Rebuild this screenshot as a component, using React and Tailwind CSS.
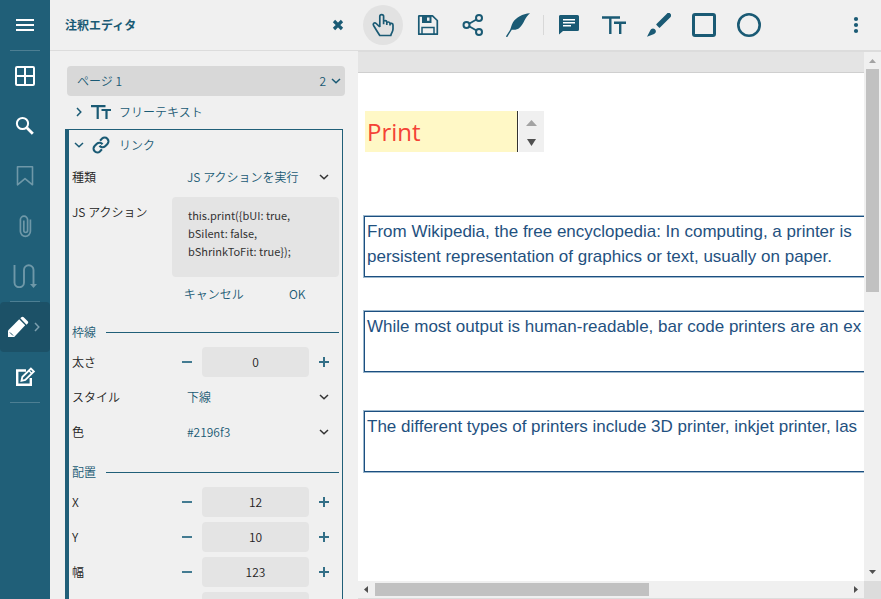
import React from "react";

function Svg({ size = 24, w, h, box, className = "", children }) {
  return (
    <svg
      width={w || size}
      height={h || size}
      viewBox={box || `0 0 ${w || size} ${h || size}`}
      fill="none"
      stroke="currentColor"
      className={`shrink-0 ${className}`}
      aria-hidden="true"
    >
      {children}
    </svg>
  );
}

const MenuIcon = () => (
  <Svg>
    <path d="M3 7h18M3 12h18M3 17h18" strokeWidth="2" />
  </Svg>
);
const GridIcon = () => (
  <Svg>
    <rect x="3" y="3" width="18" height="18" rx="1" strokeWidth="2" />
    <path d="M12 3v18M3 12h18" strokeWidth="2" />
  </Svg>
);
const SearchIcon = () => (
  <Svg>
    <circle cx="9.5" cy="9.5" r="5.6" strokeWidth="2" />
    <path d="M13.8 13.8l6 6" strokeWidth="2.8" />
  </Svg>
);
const BookmarkIcon = () => (
  <Svg>
    <path d="M4.5 2.8h15v18L12 14.6 4.5 20.8z" strokeWidth="1.6" strokeLinejoin="round" />
  </Svg>
);
const ClipIcon = () => (
  <Svg>
    <path
      d="M17.4 5.5v11.8a5 5 0 0 1-10 0V5.8a3.6 3.6 0 0 1 7.2 0v10.8a1.9 1.9 0 0 1-3.8 0V6.5"
      strokeWidth="1.7"
    />
  </Svg>
);
const FlowIcon = () => (
  <Svg>
    <path d="M1.5 1v17.500a4.700 4.700 0 0 0 9.500 0V6a4.700 4.700 0 0 1 9.500 0v15" strokeWidth="1.900" />
    <path d="M17 20h7l-3.500 4z" fill="currentColor" stroke="none" />
  </Svg>
);
const PencilIcon = () => (
  <Svg size={22}>
    <path d="M1 21v-6.500L12.200 3.300l6 6L7.200 21z" fill="currentColor" stroke="none" />
    <path d="M13.300 2.200l1-1c.7-.7 1.700-.7 2.400 0l4 4c.7.7.7 1.700 0 2.400l-1.200 1.200z" fill="currentColor" stroke="none" />
    <path d="M3 16.500l3 3" stroke="#1c5167" strokeWidth="1" />
  </Svg>
);
const EditIcon = () => (
  <Svg>
    <path d="M13 5.500H4.200v14.300h13.600V13" strokeWidth="2.400" />
    <path d="M8.500 15.800l.8-3.800 8.600-8.500 3 3-8.600 8.500z" strokeWidth="1.800" />
    <path d="M15.800 5.500l3 3" strokeWidth="1.500" />
  </Svg>
);

const HandIcon = () => (
  <Svg>
    <path
      d="M8.800 14V3.200c0-2.200 3.800-2.200 3.800 0v8M12.600 10V8.800c0-1.700 3.200-1.700 3.200.2V12M15.800 10c.2-1.500 3.200-1.300 3.200.4V12.500M19 11.200c.5-1.300 3-1 3 .8v4c0 2-1 3.200-1.600 4.600l-.6 1.900H8.800l-1.300-2L5 16.500l-2.400-4c-1.200-2.200 1-3.600 2.600-2l3.600 3.500"
      strokeWidth="1.700"
      strokeLinejoin="round"
    />
  </Svg>
);
const SaveIcon = () => (
  <Svg>
    <path d="M3 2.800h13.500l4.800 4.700v13.700H2.800V3z" strokeWidth="1.700" strokeLinejoin="round" />
    <path d="M6 3h9.500v7H6z" fill="currentColor" stroke="none" />
    <path d="M11 4.500h2.500v3.300H11z" fill="#f0f0f0" stroke="none" />
    <path d="M6 21v-6.500h12V21" strokeWidth="1.500" />
  </Svg>
);
const ShareIcon = () => (
  <Svg>
    <path d="M8.500 10.500l7-4M8.500 13.500l7 4" strokeWidth="1.800" />
    <circle cx="5.500" cy="12" r="3" strokeWidth="2" />
    <circle cx="18" cy="5" r="3" strokeWidth="2" />
    <circle cx="18" cy="19" r="3" strokeWidth="2" />
  </Svg>
);
const FeatherIcon = () => (
  <Svg>
    <path
      d="M24 .2C16.500.6 10 4.500 7 9.200c-1.600 2.600-1.700 5-3 7.800L-.2 23.600l1.500.4 4.500-7.300c3 .3 5.500.2 8-2.200C18.500 10 18.500 4.500 24 .2z"
      fill="currentColor"
      stroke="none"
    />
  </Svg>
);
const CommentIcon = () => (
  <Svg>
    <path d="M4 2h16.500A1.500 1.500 0 0 1 22 3.500v13a1.500 1.500 0 0 1-1.500 1.500H6l-4 3.500V3.500A1.500 1.500 0 0 1 4 2z" fill="currentColor" stroke="none" />
    <path d="M6 6.800h12M6 9.800h12M6 12.800h8" stroke="#fff" strokeWidth="1.600" />
  </Svg>
);
const TextIcon = () => (
  <Svg>
    <path d="M0 4.500h18M8.300 4.500V21M12 9.700h12M18.200 9.700V21" strokeWidth="2.400" />
  </Svg>
);
const SmallTextIcon = () => (
  <Svg w={20} h={16}>
    <path d="M0 2.200h14.500M6.700 2.200V15M10.500 6H20M15.500 6v9" strokeWidth="2.200" />
  </Svg>
);
const BrushIcon = () => (
  <Svg>
    <path d="M11.500 12.500L21.600 2.400" strokeWidth="5" strokeLinecap="round" />
    <path d="M6.800 10.800l6.400 6.400" stroke="#f0f0f0" strokeWidth="2" />
    <path d="M0 23.700L3.200 17.500c.8-1.900 3-2.800 4.700-1.200s1.100 3.900-.8 4.700z" fill="currentColor" stroke="none" />
  </Svg>
);
const SquareIcon = () => (
  <Svg>
    <rect x="1.500" y="1.500" width="21" height="21" rx="1.500" strokeWidth="3" />
  </Svg>
);
const CircleIcon = () => (
  <Svg>
    <circle cx="12" cy="12" r="10.700" strokeWidth="2.600" />
  </Svg>
);
const MoreIcon = () => (
  <Svg>
    <g fill="currentColor" stroke="none">
      <circle cx="12" cy="6" r="2.100" />
      <circle cx="12" cy="12" r="2.100" />
      <circle cx="12" cy="18" r="2.100" />
    </g>
  </Svg>
);
const LinkIcon = () => (
  <Svg size={18} box="0 0 24 24">
    <g strokeWidth="2.800">
      <path d="M10 13a5 5 0 0 0 7.540.540l3-3a5 5 0 0 0-7.070-7.070l-2.720 2.710" />
      <path d="M14 11a5 5 0 0 0-7.540-.540l-3 3a5 5 0 0 0 7.070 7.070l2.710-2.710" />
    </g>
  </Svg>
);
const CloseIcon = () => (
  <Svg size={12}>
    <path d="M2 2l8 8M10 2l-8 8" strokeWidth="3.200" />
  </Svg>
);
const ChevronDown = ({ className }) => (
  <Svg size={12} className={className}>
    <path d="M2 4l4 3.800L10 4" strokeWidth="1.500" />
  </Svg>
);
const ChevronRight = ({ className }) => (
  <Svg size={12} className={className}>
    <path d="M4 2l3.800 4L4 10" strokeWidth="1.500" />
  </Svg>
);
const Minus = () => (
  <Svg size={12} className="text-[#437b91]">
    <path d="M1 6h10" strokeWidth="2" />
  </Svg>
);
const Plus = () => (
  <Svg size={12} className="text-[#336f87]">
    <path d="M1 6h10M6 1v10" strokeWidth="2" />
  </Svg>
);

function NavButton({ label, dim, active, children }) {
  return (
    <button
      type="button"
      aria-label={label}
      className={`flex h-[50px] w-full items-center justify-center ${
        active ? "rounded-sm bg-[#1c5167]" : ""
      } ${dim ? "text-[#6f98a8]" : "text-white"}`}
    >
      {children}
    </button>
  );
}

const NavDivider = () => <hr className="mx-[10px] border-t border-[#4d7f93]" />;

function Sidebar() {
  return (
    <nav className="w-[50px] shrink-0 bg-[#205f78]">
      <NavButton label="メニュー"><MenuIcon /></NavButton>
      <NavDivider />
      <NavButton label="サムネイル"><GridIcon /></NavButton>
      <NavButton label="検索"><SearchIcon /></NavButton>
      <NavButton label="しおり" dim><BookmarkIcon /></NavButton>
      <NavButton label="添付ファイル" dim><ClipIcon /></NavButton>
      <NavButton label="アーティクル" dim><FlowIcon /></NavButton>
      <NavDivider />
      <NavButton label="注釈エディタ" active>
        <PencilIcon />
        <ChevronRight className="ml-[2px] text-[#7c9fae]" />
      </NavButton>
      <NavButton label="フォームエディタ"><EditIcon /></NavButton>
      <NavDivider />
    </nav>
  );
}

function Field({ id, label, children }) {
  return (
    <div className="flex">
      <label htmlFor={id} className="w-[100px] shrink-0 leading-[30px] text-[#222]">
        {label}
      </label>
      <div className="min-w-0 flex-1">{children}</div>
    </div>
  );
}

function SelectField({ id, label, value }) {
  return (
    <Field id={id} label={label}>
      <div className="relative">
        <select
          id={id}
          defaultValue={value}
          className="h-[30px] w-full appearance-none bg-transparent pr-[30px] pl-[15px]"
        >
          <option>{value}</option>
        </select>
        <ChevronDown className="pointer-events-none absolute top-[9px] right-[9px] text-[#333]" />
      </div>
    </Field>
  );
}

function NumberField({ id, label, value }) {
  return (
    <Field id={id} label={label}>
      <div className="flex">
        <button type="button" aria-label={`${label} −`} className="flex w-[30px] items-center justify-center">
          <Minus />
        </button>
        <input
          id={id}
          defaultValue={value}
          className="h-[30px] min-w-0 flex-1 rounded-sm bg-[#e4e4e4] pb-[2px] text-center text-[#222]"
        />
        <button type="button" aria-label={`${label} +`} className="flex w-[30px] items-center justify-center">
          <Plus />
        </button>
      </div>
    </Field>
  );
}

function SectionTitle({ children }) {
  return (
    <h3 className="-mb-[5px] flex h-[35px] items-center gap-[10px] pt-[5px] font-[350] after:h-px after:flex-1 after:bg-[#205f78]">
      {children}
    </h3>
  );
}

function EditorPanel() {
  return (
    <section className="flex w-[308px] shrink-0 flex-col">
      <header className="flex h-[51px] items-center justify-between border-b border-[#dcdcdc] pr-[14px] pl-[15px]">
        <h2 className="font-bold">注釈エディタ</h2>
        <button type="button" aria-label="閉じる"><CloseIcon /></button>
      </header>
      <div className="min-h-0 flex-1 overflow-hidden pt-[15px] pr-[13px] pl-[15px]">
        <button
          type="button"
          className="ml-[2px] flex h-[30px] w-[278px] items-center rounded-sm bg-[#d8d8d8] pr-[3px] pl-[10px]"
        >
          <span className="flex-1 text-left">ページ 1</span>
          <span>2</span>
          <ChevronDown className="ml-1" />
        </button>
        <button type="button" className="flex h-[33px] items-center gap-[6px] pb-[2px] pl-2">
          <ChevronRight />
          <SmallTextIcon />
          <span className="pl-[2px]">フリーテキスト</span>
        </button>
        <div className="mr-[2px] border-t border-r border-l-4 border-[#205f78] px-[3px]">
          <button type="button" className="flex h-[30px] items-center gap-[7px] pl-px">
            <ChevronDown />
            <LinkIcon />
            <span className="pl-[2px]">リンク</span>
          </button>
          <div className="flex flex-col gap-[5px] pt-[2px]">
            <SelectField id="kind" label="種類" value="JS アクションを実行" />
            <Field id="script" label="JS アクション">
              <textarea
                id="script"
                defaultValue="this.print({bUI: true, bSilent: false, bShrinkToFit: true});"
                className="block h-20 w-full resize-none overflow-hidden rounded-sm bg-[#e4e4e4] py-[9px] pr-11 pl-4 text-[11px] leading-[18px] font-normal text-[#333]"
              />
              <div className="flex h-[30px] pt-1">
                <button type="button" className="flex-1">キャンセル</button>
                <button type="button" className="flex-1">OK</button>
              </div>
            </Field>
            <SectionTitle>枠線</SectionTitle>
            <NumberField id="width" label="太さ" value="0" />
            <SelectField id="style" label="スタイル" value="下線" />
            <SelectField id="color" label="色" value="#2196f3" />
            <SectionTitle>配置</SectionTitle>
            <NumberField id="x" label="X" value="12" />
            <NumberField id="y" label="Y" value="10" />
            <NumberField id="w" label="幅" value="123" />
            <NumberField id="h" label="高さ" value="33" />
          </div>
        </div>
      </div>
    </section>
  );
}

function Tool({ label, active, children }) {
  return (
    <button
      type="button"
      aria-label={label}
      className={`flex size-10 shrink-0 items-center justify-center rounded-full ${
        active ? "bg-[#e2e2e2]" : ""
      }`}
    >
      {children}
    </button>
  );
}

function Toolbar() {
  return (
    <header className="flex h-[51px] items-center gap-[5px] border-b border-[#dcdcdc] px-[5px]">
      <Tool label="手のひら" active><HandIcon /></Tool>
      <Tool label="保存"><SaveIcon /></Tool>
      <Tool label="共有"><ShareIcon /></Tool>
      <Tool label="署名"><FeatherIcon /></Tool>
      <span className="h-5 w-px bg-[#d8d8d8]" />
      <Tool label="コメント"><CommentIcon /></Tool>
      <Tool label="テキスト"><TextIcon /></Tool>
      <Tool label="ブラシ"><BrushIcon /></Tool>
      <Tool label="四角形"><SquareIcon /></Tool>
      <Tool label="円"><CircleIcon /></Tool>
      <div className="flex-1" />
      <Tool label="その他"><MoreIcon /></Tool>
    </header>
  );
}

function Arrow({ d, color = "text-[#505050]" }) {
  return (
    <svg width="17" height="17" viewBox="0 0 17 17" fill="currentColor" className={`shrink-0 ${color}`} aria-hidden="true">
      <path d={d} />
    </svg>
  );
}

function PageText({ children }) {
  return (
    <p className="h-[61px] border border-r-0 border-[#1b4f80] pt-[2px] pl-[2px] text-[17px] leading-[25px] font-normal whitespace-pre text-[#1f5180] outline outline-[#9db8cd]">
      {children}
    </p>
  );
}

function DocumentView() {
  return (
    <div className="flex min-h-0 flex-1 flex-col border-t border-b border-[#dcdcdc]">
      <div className="flex min-h-0 flex-1">
        <main className="min-w-0 flex-1 overflow-hidden bg-white">
          <div className="h-[21px] border-b border-[#cfcfcf] bg-[#e4e4e4]" />
          <div className="pt-[38px] pl-[6px] font-['Liberation_Sans',Arial,sans-serif]">
            <div className="flex h-[41px] gap-px pl-px">
              <button
                type="button"
                className="w-[153px] border-r border-[#333] bg-[#fff8c6] pl-[2px] text-left font-['Open_Sans',sans-serif] text-2xl font-normal text-[#f44336]"
              >
                Print
              </button>
              <div className="flex w-[25px] flex-col items-center justify-center gap-[2px] bg-[#f0f0f0]">
                <Arrow d="M3 12h11L8.500 6z" color="text-[#a3a3a3]" />
                <Arrow d="M4 6h9l-4.500 7z" />
              </div>
            </div>
            <div className="flex flex-col pt-16">
              <PageText>
                {"From Wikipedia, the free encyclopedia: In computing, a printer is\npersistent representation of graphics or text, usually on paper."}
              </PageText>
              <div className="pt-[34px] pb-[39px]">
                <PageText>While most output is human-readable, bar code printers are an ex</PageText>
              </div>
              <PageText>The different types of printers include 3D printer, inkjet printer, las</PageText>
            </div>
          </div>
        </main>
        <div className="flex w-[17px] shrink-0 flex-col bg-[#f0f0f0]">
          <Arrow d="M5 11h7L8.500 7z" color="text-[#a3a3a3]" />
          <div className="flex-1">
            <div className="mx-[2px] h-[45%] bg-[#c1c1c1]" />
          </div>
          <Arrow d="M5 6h7l-3.500 4z" />
        </div>
      </div>
      <div className="flex h-[17px] shrink-0">
        <div className="flex flex-1 items-center bg-[#f0f0f0]">
          <Arrow d="M10 5v7L6 8.500z" />
          <div className="flex-1">
            <div className="h-[13px] w-[58%] bg-[#c1c1c1]" />
          </div>
          <Arrow d="M7 5v7l4-3.500z" />
        </div>
        <div className="w-[17px] bg-[#dcdcdc]" />
      </div>
    </div>
  );
}

export default function App() {
  return (
    <div className="flex h-screen overflow-hidden bg-[#f0f0f0] font-['Noto_Sans_CJK_JP',sans-serif] text-xs font-[350] text-[#1a5a74]">
      <Sidebar />
      <EditorPanel />
      <div className="flex min-w-0 flex-1 flex-col">
        <Toolbar />
        <DocumentView />
      </div>
    </div>
  );
}
